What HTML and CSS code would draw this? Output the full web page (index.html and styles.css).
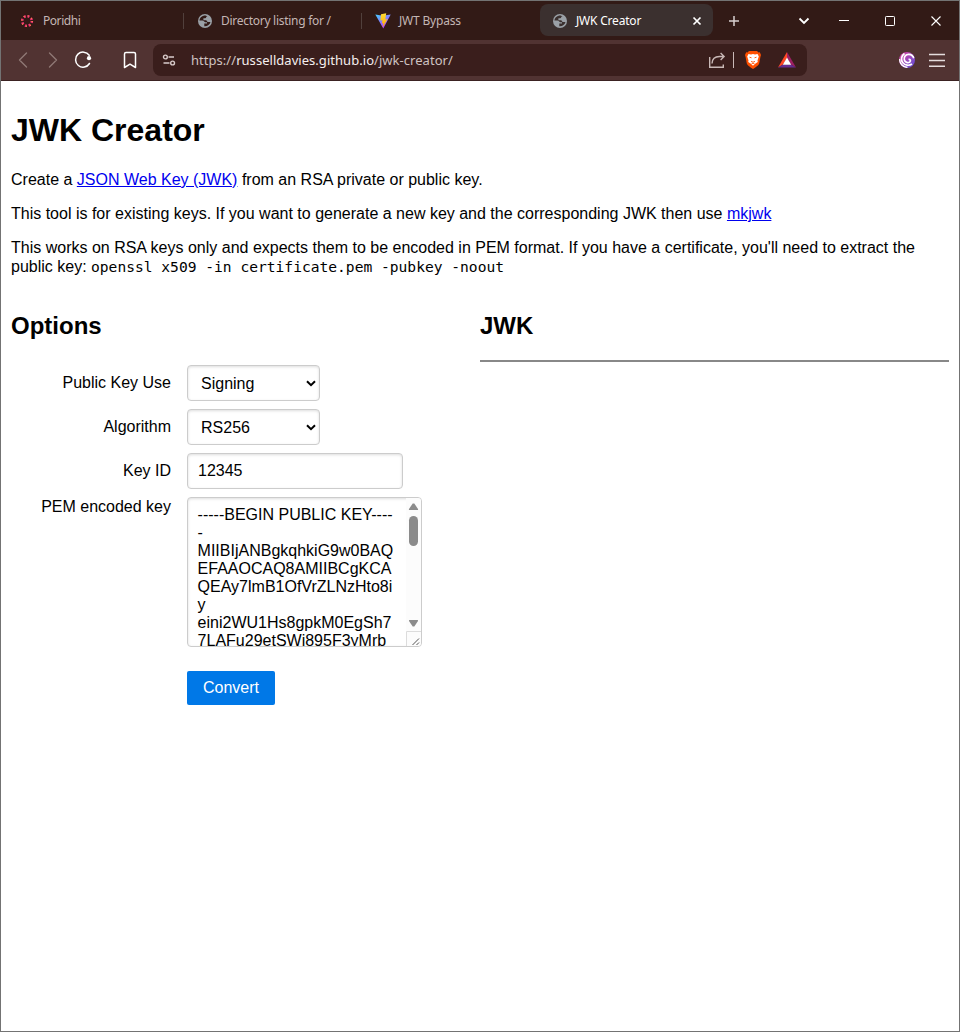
FILE: index.html
```html
<!DOCTYPE html>
<html lang="en">
<head>
<meta charset="utf-8">
<title>JWK Creator</title>
<link rel="stylesheet" href="styles.css">
</head>
<body>
<div class="window">
  <header class="tabs">
    <div class="tab tab-first">
      <svg class="tab-icon" width="14" height="14" viewBox="0 0 14 14"><circle cx="7" cy="7" r="4.800" fill="none" stroke="#ee2c74" stroke-width="2.600" stroke-dasharray="1.900 1.870"/><circle cx="7" cy="7" r="5.200" fill="none" stroke="#ff8a4a" stroke-width="1.400" stroke-dasharray=".9 3.180"/></svg>
      <span class="tab-title t1">Poridhi</span>
    </div>
    <i class="divider"></i>
    <div class="tab tab-second">
      <svg class="tab-icon" width="14" height="14" viewBox="0 0 14 14"><circle cx="7" cy="7" r="7" fill="#9aa0a6"/><path d="M6.200 1.500C3.500 2 1.600 4.200 1.400 6.600h3c1.500 0 1.600 1.600 2.900 1.600h1.700v1.300H6.300v2.800c3 .3 5.600-1.600 6.200-4.300H10c-1.300 0-.8-1.700-2.200-1.700H5.400V4.200h1.800c.9 0 1-1 1-1.500h1.300C8.700 1.900 7.500 1.400 6.200 1.500z" fill="#321a16"/></svg>
      <span class="tab-title t2">Directory listing for /</span>
    </div>
    <i class="divider"></i>
    <div class="tab tab-third">
      <svg class="tab-icon" width="16" height="16" viewBox="0 0 16 16"><defs><linearGradient id="v" x1="0" y1="0" x2=".6" y2="1"><stop offset="0" stop-color="#41d1ff"/><stop offset="1" stop-color="#bd34fe"/></linearGradient><linearGradient id="b" x1="0" y1="0" x2="0" y2="1"><stop offset="0" stop-color="#ffdd35"/><stop offset="1" stop-color="#ffa800"/></linearGradient></defs><path d="M.3 1.500l7.400 1.300L15.700 1.500 8.300 15.500z" fill="url(#v)"/><path d="M11.200.2L6 1.200l-.6 6.400 2.100-.4-.6 3 1.400-.3-.7 4.300 5-8.200-2.300.4z" fill="url(#b)"/></svg>
      <span class="tab-title t3">JWT Bypass</span>
    </div>
    <div class="tab tab-active">
      <svg class="tab-icon" width="14" height="14" viewBox="0 0 14 14"><circle cx="7" cy="7" r="7" fill="#9aa0a6"/><path d="M6.200 1.500C3.500 2 1.600 4.200 1.400 6.600h3c1.500 0 1.600 1.600 2.900 1.600h1.700v1.300H6.300v2.800c3 .3 5.600-1.600 6.200-4.300H10c-1.300 0-.8-1.700-2.200-1.700H5.400V4.200h1.800c.9 0 1-1 1-1.500h1.300C8.700 1.900 7.500 1.400 6.200 1.500z" fill="#3b302f"/></svg>
      <span class="tab-title t4">JWK Creator</span>
      <svg class="tab-close" width="10" height="10" viewBox="0 0 10 10"><path d="M1.500 1.500l7 7M8.500 1.500l-7 7" stroke="#fff" stroke-width="1.700"/></svg>
    </div>
    <svg class="controls" width="240" height="40" viewBox="720 0 240 40" fill="none" stroke="#fff">
      <path d="M729 20h10M734 15v10" stroke="#d8d0cf" stroke-width="1.500"/>
      <path d="M799.500 17.500l4.500 4.500 4.500-4.500" stroke-width="1.800"/>
      <path d="M839 19.500h10"/>
      <rect x="885.500" y="15.500" width="9" height="9" rx=".8"/>
      <path d="M931.500 15.500l9 9M940.500 15.500l-9 9" stroke-width="1.100"/>
    </svg>
  </header>
  <nav class="toolbar">
    <svg class="nav-icons" width="152" height="40" viewBox="1 40 152 40" fill="none" stroke-linecap="round" stroke-linejoin="round">
      <path d="M26.500 53l-7 7 7 7M49.500 53l7 7-7 7" stroke="#8f7875" stroke-width="1.400"/>
      <path d="M89.200 55.300A7.500 7.500 0 1 0 89.500 63.500" stroke="#fff" stroke-width="1.500"/><circle cx="89" cy="58.200" r="2.100" fill="#fff"/>
      <path d="M126 52.500h8q1.500 0 1.500 1.500v13.500l-5.500-3.300-5.500 3.300V54q0-1.500 1.500-1.500z" stroke="#fff" stroke-width="1.500"/>
    </svg>
    <div class="address">
      <svg class="site-icon" width="14" height="14" viewBox="0 0 14 14" fill="none" stroke="#d9cccb" stroke-width="1.400"><path d="M6.500 4h5.500M1.500 10h6"/><circle cx="3.400" cy="4" r="1.900"/><circle cx="10.600" cy="10" r="1.900"/></svg>
      <span class="url"><b>https://</b><b class="host">russelldavies.github.io</b>/jwk-creator/</span>
      <svg class="address-icons" width="107" height="32" viewBox="700 44 107 32" fill="none">
        <path d="M709.700 57v10.300h13.600v-2.800M712 63.500c.2-4.500 3-7 7.500-7H724M720.600 53l3.500 3.500-3.500 3.500" stroke="#c9b9b7" stroke-width="1.400"/>
        <path d="M733.500 52v16" stroke="#c9b9b7"/>
        <path d="M749 51h8l1.500 1.500 1.300-.2 1.200 2.700-.6 2-1.200 6.500c-.5 1.800-3.600 4-6.200 5.500-2.600-1.500-5.700-3.700-6.200-5.500l-1.200-6.500-.6-2 1.200-2.700 1.300.2z" fill="#ff5000"/>
        <path d="M748.500 54l2.500.5 2-.5 2 .5 2.500-.5 1.300 2.500-1.300 4 .3 1.500-2.300 1.500-2.500 2.300-2.500-2.300-2.300-1.500.3-1.500-1.300-4z" fill="#fff"/>
        <path d="M749.500 57.200l2 .6M756.500 57.200l-2 .6M751 61.400l2 .8 2-.8M751.500 63.900l1.500-.7 1.500.7" stroke="#ff5000" stroke-width=".9"/>
        <path d="M787 52l-9 15.600 5-3 4-6.600z" fill="#ff4724"/><path d="M787 52l9 15.600-5-3-4-6.600z" fill="#9e1f63"/><path d="M778 67.600h18l-5-3h-8z" fill="#662d91"/><path d="M787 57.500l4.200 7.200h-8.400z" fill="#fff"/>
      </svg>
    </div>
    <svg class="menu-icons" width="64" height="40" viewBox="895 40 64 40" fill="none">
      <defs><linearGradient id="s" x1="0" y1="0" x2="1" y2="1"><stop offset="0" stop-color="#e0409c"/><stop offset="1" stop-color="#5a50dc"/></linearGradient><clipPath id="c"><circle cx="907" cy="60" r="8"/></clipPath></defs>
      <circle cx="907" cy="60" r="8" fill="url(#s)"/>
      <g clip-path="url(#c)" stroke="#fff" stroke-width="1.700"><path d="M908.500 59.500c1.600-.6 2.600 1.200 1.400 2.300-1.800 1.600-5 .6-5.600-2.100-.7-3 1.600-5.500 4.500-5.400 2.400.1 4.400 1.700 5 3.900"/><path d="M904.500 53.500c-3.200 2.300-4 6.400-1.700 9.200 2.200 2.700 6.200 3.400 9.200 1.300"/><path d="M899.500 59c-.2 4.500 3.300 8 8 8.500"/></g>
      <path d="M929 54.500h16M929 60.500h16M929 66.300h16" stroke="#e5dddd" stroke-width="1.400"/>
    </svg>
  </nav>
  <main class="page">
    <h1>JWK Creator</h1>
    <p>Create a <a href="#">JSON Web Key (JWK)</a> from an RSA private or public key.</p>
    <p class="lead">This tool is for existing keys. If you want to generate a new key and the corresponding JWK then use <a href="#">mkjwk</a></p>
    <p class="note">This works on RSA keys only and expects them to be encoded in PEM format. If you have a certificate, you'll need to extract the<br>public key: <code>openssl x509 -in certificate.pem -pubkey -noout</code></p>
    <div class="columns">
      <section>
        <h2>Options</h2>
        <div class="form">
          <label>Public Key Use</label>
          <div class="field select">Signing<svg width="10" height="7" viewBox="0 0 10 7"><path d="M1 1.200l4 4 4-4" fill="none" stroke="#000" stroke-width="2"/></svg></div>
          <label>Algorithm</label>
          <div class="field select">RS256<svg width="10" height="7" viewBox="0 0 10 7"><path d="M1 1.200l4 4 4-4" fill="none" stroke="#000" stroke-width="2"/></svg></div>
          <label>Key ID</label>
          <div class="field input">12345</div>
          <label class="label-top">PEM encoded key</label>
          <div class="field area">
            <div class="key">-----BEGIN PUBLIC KEY----<br>-<br>MIIBIjANBgkqhkiG9w0BAQ<br>EFAAOCAQ8AMIIBCgKCA<br>QEAy7lmB1OfVrZLNzHto8i<br>y<br>eini2WU1Hs8gpkM0EgSh7<br>7LAFu29etSWi895F3yMrb</div>
            <svg class="scroll" width="15" height="148" viewBox="0 0 15 148"><path d="M0 0h15v148H0z" fill="#fcfcfc"/><path d="M3 11l3.700-5.500h1.600L12 11q.5 1-.7 1H3.700q-1.200 0-.7-1z" fill="#8b8b8b"/><rect x="3" y="18" width="9" height="30" rx="4.500" fill="#8b8b8b"/><path d="M3.700 122h7.600q1.200 0 .7 1l-3.700 5.500H6.700L3 123q-.5-1 .7-1z" fill="#8b8b8b"/><path d="M.5 148v-14.500H15" fill="none" stroke="#dcdcdc"/><path d="M6.500 147l6.500-6.500M10.500 147l2.500-2.500" fill="none" stroke="#555"/></svg>
          </div>
        </div>
        <button class="convert">Convert</button>
      </section>
      <section>
        <h2>JWK</h2>
        <div class="rule"></div>
      </section>
    </div>
  </main>
</div>
</body>
</html>
```

FILE: styles.css
```css
* { box-sizing: border-box; }
body { margin: 0; background: #fff; font: 16px/18px "Liberation Sans", Arial, sans-serif; color: #000; }
svg { display: block; flex: none; }
.window { height: 1032px; border: 1px solid #737373; overflow: hidden; }

.tabs { display: flex; align-items: center; height: 39px; background: #321a16; font-family: "Noto Sans", sans-serif; font-size: 12px; color: #c4b6b4; }
.tab { display: flex; flex: none; align-items: center; height: 32px; white-space: nowrap; }
.tab-first { width: 182px; padding-left: 19px; gap: 9px; }
.tab-second { width: 177px; padding-left: 14px; gap: 9px; }
.tab-third { width: 178px; padding-left: 13px; gap: 8px; }
.tab-active { width: 173px; margin-bottom: 1px; padding: 1px 11px 0 13px; gap: 9px; border-radius: 8px; background: #3b302f; color: #fff; }
.tab-close { margin-left: auto; }
.divider { flex: none; width: 1px; height: 16px; background: #51403c; }
.t1 { letter-spacing: -.45px; }
.t2 { letter-spacing: -.28px; }
.t3 { letter-spacing: -.2px; }
.t4 { letter-spacing: -.2px; }
.controls { margin-left: 7px; }

.toolbar { display: flex; align-items: center; height: 41px; background: #513332; border-bottom: 1px solid #3b2222; }
.nav-icons, .address, .menu-icons { flex: none; }
.address { display: flex; align-items: center; width: 654px; height: 32px; margin-right: 88px; padding-left: 9px; border-radius: 8px; background: #3a1e1c; }
.url { margin-left: 15px; font: 13px/18px "Noto Sans", sans-serif; letter-spacing: .04px; color: #cfc3c1; white-space: nowrap; }
.url b { font-weight: 400; }
.url .host { color: #f5eeee; }
.address-icons { margin-left: auto; }

.page { padding: 31px 10px 0; }
h1 { margin: 0 0 22px; font-size: 32px; line-height: 37px; }
p { margin: 0 0 16px; }
a { color: #0000ee; }
.lead { margin-bottom: 15px; }
.note { margin-bottom: 17px; line-height: 19px; }
code { font: 14.6px/18px "DejaVu Sans Mono", monospace; }
.columns { display: grid; grid-template-columns: 469px 469px; padding-top: 19px; }
h2 { margin: 0; font-size: 24px; line-height: 28px; }
.rule { height: 2px; margin-top: 20px; background: #888; }
.form { display: grid; grid-template-columns: 160px auto; column-gap: 16px; row-gap: 8px; justify-content: start; margin-top: 25px; }
label { text-align: right; padding-top: 9px; }
.label-top { padding-top: 1px; }
.field { height: 36px; border: 1px solid #ccc; border-radius: 4px; box-shadow: inset 0 1px 3px #ddd; }
.select { display: flex; align-items: center; justify-content: space-between; width: 133px; padding: 1px 3px 0 13px; }
.input { width: 216px; padding: 8px 10px; }
.area { display: flex; justify-content: space-between; width: 235px; height: 150px; overflow: hidden; }
.key { padding: 8px 0 0 9.600px; white-space: nowrap; }
.convert { display: block; width: 88px; height: 34px; margin: 24px 0 0 176px; padding: 0; border: 0; border-radius: 2px; background: #0078e7; color: #fff; font: 16px/18px "Liberation Sans", Arial, sans-serif; }
```
